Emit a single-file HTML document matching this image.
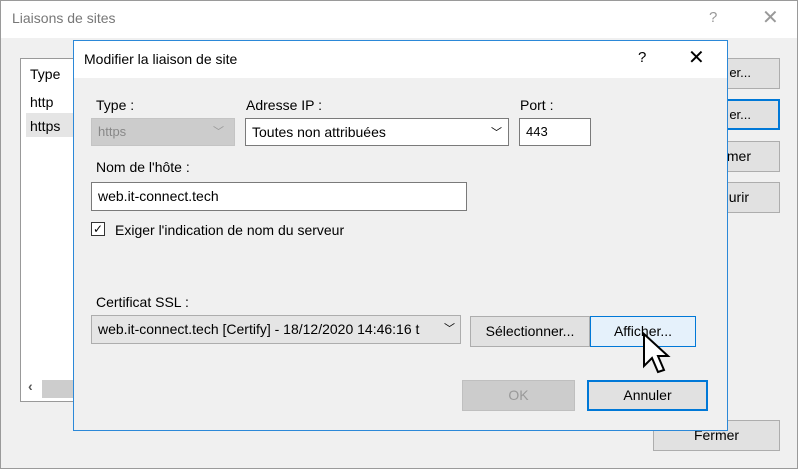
<!DOCTYPE html>
<html><head><style>
*{box-sizing:border-box;margin:0;padding:0}
body{width:800px;height:470px;overflow:hidden;background:#fff;font-family:"Liberation Sans",sans-serif;font-size:13px;color:#000;position:relative}
.a{position:absolute}
.btn{position:absolute;background:#e1e1e1;border:1px solid #adadad;text-align:center;line-height:28px;font-size:13px}
.in{position:absolute;background:#fff;border:1px solid #7a7a7a;padding-left:6px;line-height:26px}
</style></head><body>
<!-- outer window -->
<div class="a" style="left:0;top:0;width:798px;height:469px;border:1px solid #9a9a9a;background:#f0f0f0"></div>
<div class="a" style="left:1px;top:1px;width:796px;height:37px;background:#fff"></div>
<div class="a" style="left:12px;top:10px;font-size:14px;color:#777">Liaisons de sites</div>
<div class="a" style="left:709px;top:9px;font-size:15px;color:#999">?</div>
<div class="a" style="left:762px;top:5px;font-size:20px;color:#999">✕</div>
<div class="a" style="left:20px;top:58px;width:60px;height:344px;background:#fff;border:1px solid #999"></div>
<div class="a" style="left:30px;top:66px;font-size:14px">Type</div>
<div class="a" style="left:30px;top:94px;font-size:14px">http</div>
<div class="a" style="left:26px;top:113px;width:50px;height:24px;background:#e5e5e5"></div>
<div class="a" style="left:30px;top:118px;font-size:14px">https</div>
<div class="a" style="left:42px;top:380px;width:35px;height:18px;background:#cdcdcd"></div>
<div class="a" style="left:28px;top:378px;font-size:14px;font-weight:bold;color:#555">‹</div>
<div class="btn" style="left:640px;top:58px;width:140px;height:31px;text-align:right;padding-right:28px">er...</div>
<div class="btn" style="left:640px;top:99px;width:140px;height:31px;border:2px solid #0078d7;text-align:right;padding-right:27px;line-height:27px">er...</div>
<div class="btn" style="left:640px;top:141px;width:140px;height:31px;text-align:right;padding-right:28px;font-size:14px">mer</div>
<div class="btn" style="left:640px;top:182px;width:140px;height:31px;text-align:right;padding-right:30px;font-size:14px">urir</div>
<div class="btn" style="left:653px;top:420px;width:127px;height:31px;font-size:14px">Fermer</div>
<!-- inner dialog -->
<div class="a" style="left:73px;top:40px;width:655px;height:391px;border:1px solid #2b88d8;background:#f0f0f0"></div>
<div class="a" style="left:74px;top:41px;width:653px;height:37px;background:#fff"></div>
<div class="a" style="left:84px;top:51px;font-size:14px">Modifier la liaison de site</div>
<div class="a" style="left:638px;top:49px;font-size:15px">?</div>
<div class="a" style="left:688px;top:45px;font-size:20px">✕</div>
<div class="a" style="left:96px;top:97px;font-size:14px">Type :</div>
<div class="a" style="left:246px;top:97px;font-size:14px">Adresse IP :</div>
<div class="a" style="left:520px;top:97px;font-size:14px">Port :</div>
<div class="in" style="left:91px;top:118px;width:144px;height:28px;background:#cccccc;border-color:#c4c4c4;color:#888">https<span style="position:absolute;right:10px;color:#999;font-size:11px">﹀</span></div>
<div class="in" style="left:245px;top:118px;width:264px;height:28px;font-size:14px">Toutes non attribuées<span style="position:absolute;right:6px;top:1px;font-size:11px">﹀</span></div>
<div class="in" style="left:519px;top:118px;width:72px;height:28px">443</div>
<div class="a" style="left:96px;top:159px;font-size:14px">Nom de l'hôte :</div>
<div class="in" style="left:91px;top:182px;width:376px;height:29px;font-size:14px">web.it-connect.tech</div>
<div class="a" style="left:91px;top:222px;width:14px;height:14px;border:1px solid #333;background:#fff;font-size:12px;line-height:12px;text-align:center">✓</div>
<div class="a" style="left:115px;top:222px;font-size:14px">Exiger l'indication de nom du serveur</div>
<div class="a" style="left:96px;top:294px;font-size:14px">Certificat SSL :</div>
<div class="in" style="left:91px;top:315px;width:370px;height:29px;background:#e5e5e5;border-color:#adadad;font-size:14px;white-space:nowrap;overflow:hidden">web.it-connect.tech [Certify] - 18/12/2020 14:46:16 t<span style="position:absolute;right:5px;top:0;background:#e5e5e5;padding-left:3px;font-size:11px">﹀</span></div>
<div class="btn" style="left:470px;top:316px;width:120px;height:31px;font-size:14px">Sélectionner...</div>
<div class="btn" style="left:590px;top:316px;width:106px;height:31px;border-color:#0078d7;background:#e5f1fb;font-size:14px">Afficher...</div>
<div class="btn" style="left:462px;top:380px;width:113px;height:31px;background:#cccccc;border-color:#bfbfbf;color:#999;font-size:14px">OK</div>
<div class="btn" style="left:587px;top:380px;width:121px;height:31px;border:2px solid #0078d7;line-height:27px;font-size:14px">Annuler</div>
<!-- cursor -->
<svg class="a" style="left:642px;top:332px" width="30" height="48" viewBox="0 0 15 24"><path d="M1 1 L1 17 L5 13 L8 20 L11 19 L8 12 L13 12 Z" fill="#fff" stroke="#000" stroke-width="1"/></svg>
</body></html>
